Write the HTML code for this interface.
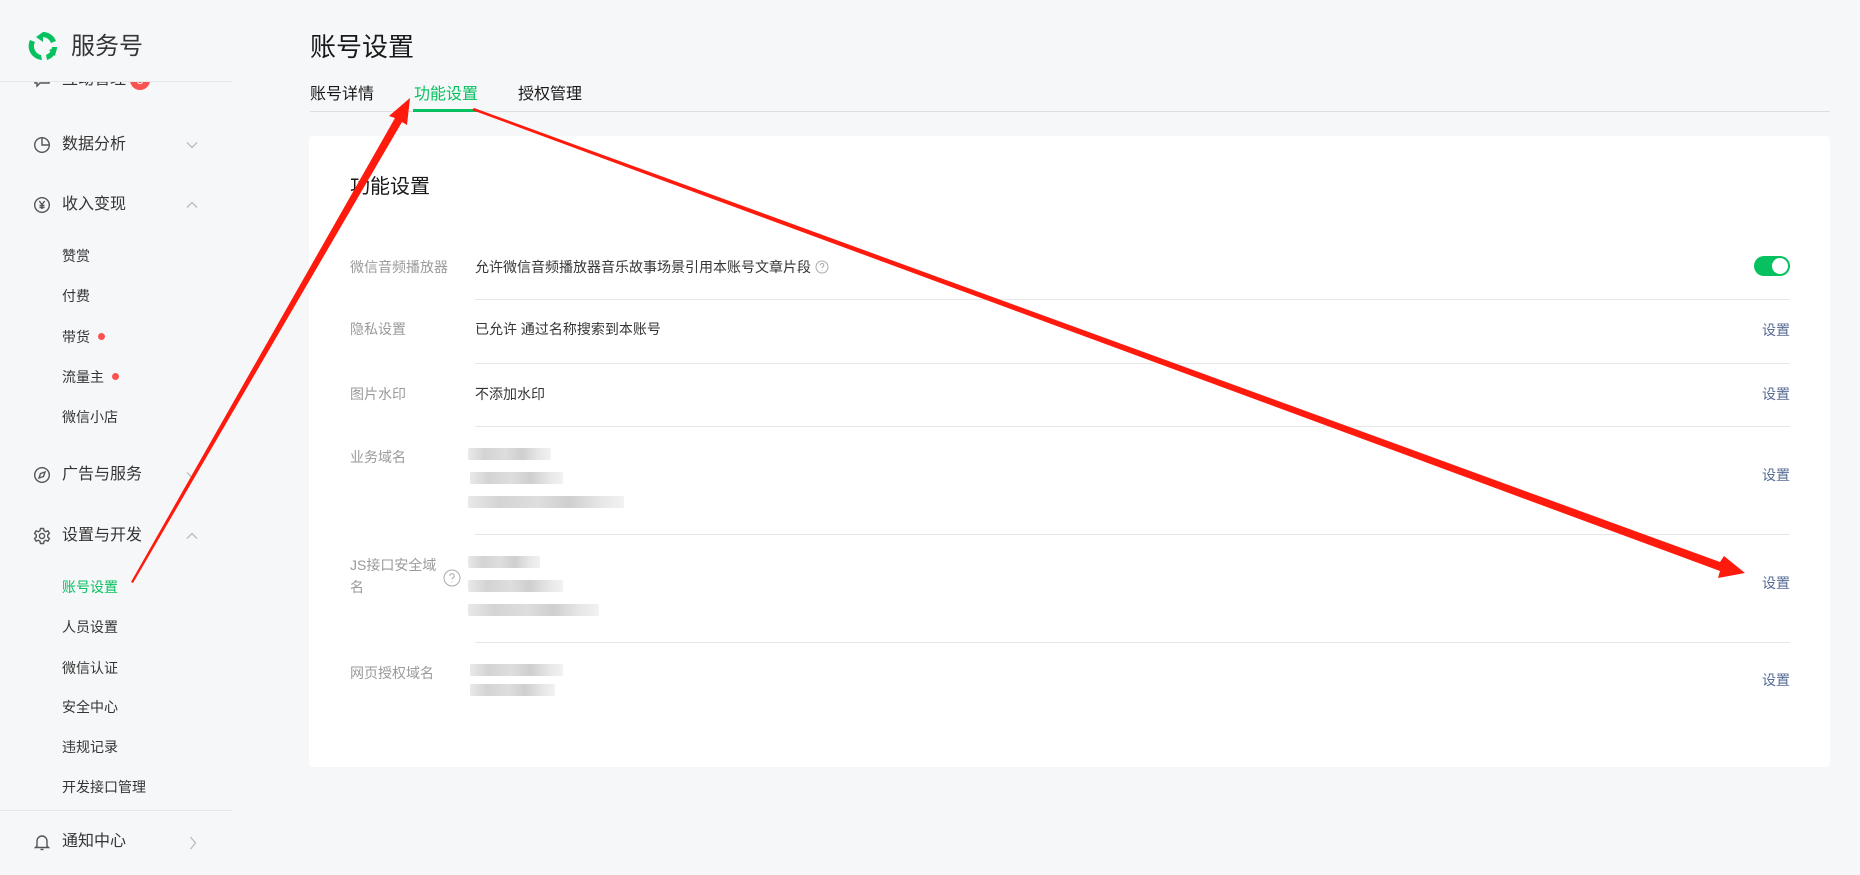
<!DOCTYPE html>
<html><head><meta charset="utf-8"><style>
*{margin:0;padding:0;box-sizing:border-box}
body{width:1860px;height:875px;background:#f6f7f9;position:relative;overflow:hidden;font-family:"Liberation Sans","Noto Sans CJK SC",sans-serif;color:#353535}
.a{position:absolute;white-space:nowrap}
.m{font-size:16px;line-height:20px;left:62px;color:#353535;margin-top:2px}
.s{font-size:14px;line-height:18px;left:62px;color:#353535;margin-top:1px}
.ic{position:absolute;left:33px;width:18px;height:18px;margin-top:2px}
.ch{position:absolute;left:186px;width:12px;height:8px;margin-top:2px}
.lb{font-size:14px;color:#9a9a9a;left:350px;line-height:18px}
.vl{font-size:14px;color:#353535;left:475px;line-height:18px}
.ln{position:absolute;left:475px;width:1315px;height:1px;background:#e7e7e7}
.st{font-size:14px;color:#576b95;right:70px;line-height:18px}
.bl{position:absolute;height:12px;background:linear-gradient(90deg,#e6e6e6,#cfcfcf 20%,#dadada 45%,#c9c9c9 65%,#e4e4e4 85%,#f0f0f0);border-radius:2px;opacity:.9}
</style></head><body>
<div class="a m" style="top:68px">互动管理</div>
<div class="a" style="left:130px;top:70px;width:20px;height:20px;border-radius:10px;background:#fa5151;color:#fff;font-size:12px;text-align:center;line-height:20px">3</div>
<svg class="ic" style="top:68px" viewBox="0 0 18 18" fill="none" stroke="#555" stroke-width="1.4"><path d="M2 3h14v10H7l-3 3v-3H2z"/></svg>

<svg class="ic" style="top:134px" viewBox="0 0 18 18" fill="none" stroke="#555" stroke-width="1.4"><circle cx="9" cy="9" r="7.3"/><path d="M9 1.7V9h7.3"/></svg>
<div class="a m" style="top:133px">数据分析</div>
<svg class="ch" style="top:139px" viewBox="0 0 12 8" fill="none" stroke="#bbb" stroke-width="1.3"><path d="M1 1.5l5 5 5-5"/></svg>

<svg class="ic" style="top:194px" viewBox="0 0 18 18" fill="none" stroke="#555" stroke-width="1.4"><circle cx="9" cy="9" r="7.3"/><path d="M6.3 5l2.7 3.5L11.7 5M9 8.5V13M6.5 9.5h5M6.5 11.5h5"/></svg>
<div class="a m" style="top:193px">收入变现</div>
<svg class="ch" style="top:199px" viewBox="0 0 12 8" fill="none" stroke="#bbb" stroke-width="1.3"><path d="M1 6.5l5-5 5 5"/></svg>

<div class="a s" style="top:246px">赞赏</div>
<div class="a s" style="top:286px">付费</div>
<div class="a s" style="top:327px">带货</div>
<div class="a" style="left:98px;top:333px;width:7px;height:7px;border-radius:4px;background:#fa5151"></div>
<div class="a s" style="top:367px">流量主</div>
<div class="a" style="left:112px;top:373px;width:7px;height:7px;border-radius:4px;background:#fa5151"></div>
<div class="a s" style="top:407px">微信小店</div>

<svg class="ic" style="top:464px" viewBox="0 0 18 18" fill="none" stroke="#555" stroke-width="1.4"><circle cx="9" cy="9" r="7.3"/><path d="M12 6l-4.5 1.5L6 12l4.5-1.5z"/></svg>
<div class="a m" style="top:463px">广告与服务</div>
<svg class="ch" style="top:469px" viewBox="0 0 12 8" fill="none" stroke="#bbb" stroke-width="1.3"><path d="M1 1.5l5 5 5-5"/></svg>

<svg class="ic" style="top:525px" viewBox="0 0 18 18" fill="none" stroke="#555" stroke-width="1.4"><path d="M7.5 1.5h3l.5 2.2 1.8 1 2.1-.8 1.5 2.6-1.7 1.5v2l1.7 1.5-1.5 2.6-2.1-.8-1.8 1-.5 2.2h-3l-.5-2.2-1.8-1-2.1.8-1.5-2.6 1.7-1.5V8L1.6 6.5l1.5-2.6 2.1.8 1.8-1z"/><circle cx="9" cy="9" r="2.6"/></svg>
<div class="a m" style="top:524px">设置与开发</div>
<svg class="ch" style="top:530px" viewBox="0 0 12 8" fill="none" stroke="#bbb" stroke-width="1.3"><path d="M1 6.5l5-5 5 5"/></svg>

<div class="a s" style="top:577px;color:#07c160">账号设置</div>
<div class="a s" style="top:617px">人员设置</div>
<div class="a s" style="top:658px">微信认证</div>
<div class="a s" style="top:697px">安全中心</div>
<div class="a s" style="top:737px">违规记录</div>
<div class="a s" style="top:777px">开发接口管理</div>
<div class="a" style="left:0;top:810px;width:232px;height:1px;background:#e5e6e8"></div>
<svg class="ic" style="top:831px" viewBox="0 0 18 18" fill="none" stroke="#555" stroke-width="1.4"><path d="M4 13V8a5 5 0 0 1 10 0v5l1.5 1.5h-13z"/><path d="M7.5 16.5h3"/></svg>
<div class="a m" style="top:830px">通知中心</div>
<svg class="a" style="left:189px;top:836px;width:8px;height:14px" viewBox="0 0 8 14" fill="none" stroke="#bbb" stroke-width="1.3"><path d="M1.5 1l5 6-5 6"/></svg>

<div class="a" style="left:0;top:0;width:234px;height:81px;background:#f6f7f9"></div>
<div class="a" style="left:0;top:81px;width:232px;height:1px;background:#e5e6e8"></div>
<svg class="a" style="left:27px;top:30px;width:32px;height:32px" viewBox="0 0 32 32"><path d="M16 2a14 14 0 0 1 13 9l-5 2a9 9 0 0 0-8-6V2z" fill="#07c160"/><path d="M30 17a14 14 0 0 1-10 13l-1-5a9 9 0 0 0 6-8z" fill="#07c160"/><path d="M15 30A14 14 0 0 1 3 10l5 2a9 9 0 0 0 6 13z" fill="#07c160"/><path d="M16 2L9 7l7 5z M30 17l-8 3 6 6z" fill="#07c160"/></svg>
<div class="a" style="left:71px;top:33px;font-size:24px;line-height:28px;color:#353535">服务号</div>

<div class="a" style="left:310px;top:32px;font-size:26px;line-height:30px;color:#191919">账号设置</div>
<div class="a" style="left:310px;top:85px;font-size:16px;line-height:20px;color:#191919">账号详情</div>
<div class="a" style="left:414px;top:85px;font-size:16px;line-height:20px;color:#07c160">功能设置</div>
<div class="a" style="left:518px;top:85px;font-size:16px;line-height:20px;color:#191919">授权管理</div>
<div class="a" style="left:310px;top:111px;width:1520px;height:1px;background:#dcdee2"></div>
<div class="a" style="left:413px;top:109px;width:64px;height:3px;background:#07c160"></div>

<div class="a" style="left:309px;top:136px;width:1521px;height:631px;background:#fff;border-radius:4px"></div>
<div class="a" style="left:350px;top:175px;font-size:20px;line-height:24px;color:#191919">功能设置</div>

<div class="a lb" style="top:258px">微信音频播放器</div>
<div class="a vl" style="top:258px">允许微信音频播放器音乐故事场景引用本账号文章片段</div>
<svg class="a" style="left:815px;top:260px;width:14px;height:14px" viewBox="0 0 14 14" fill="none" stroke="#aaa" stroke-width="1"><circle cx="7" cy="7" r="6"/><path d="M5.2 5.3a1.8 1.8 0 1 1 2.5 1.6c-.5.3-.7.6-.7 1.2M7 10v.6"/></svg>
<div class="a" style="left:1754px;top:256px;width:36px;height:20px;border-radius:10px;background:#07c160"></div>
<div class="a" style="left:1772px;top:258px;width:16px;height:16px;border-radius:8px;background:#fff"></div>
<div class="ln" style="top:299px"></div>

<div class="a lb" style="top:320px">隐私设置</div>
<div class="a vl" style="top:320px">已允许 通过名称搜索到本账号</div>
<div class="a st" style="top:321px">设置</div>
<div class="ln" style="top:363px"></div>

<div class="a lb" style="top:385px">图片水印</div>
<div class="a vl" style="top:385px">不添加水印</div>
<div class="a st" style="top:385px">设置</div>
<div class="ln" style="top:426px"></div>

<div class="a lb" style="top:448px">业务域名</div>
<div class="bl" style="left:468px;top:448px;width:83px"></div>
<div class="bl" style="left:470px;top:472px;width:93px"></div>
<div class="bl" style="left:468px;top:496px;width:156px"></div>
<div class="a st" style="top:466px">设置</div>
<div class="ln" style="top:534px"></div>

<div class="a lb" style="top:556px">JS接口安全域</div>
<div class="a lb" style="top:578px">名</div>
<svg class="a" style="left:443px;top:569px;width:18px;height:18px" viewBox="0 0 18 18" fill="none" stroke="#aaa" stroke-width="1"><circle cx="9" cy="9" r="8"/><path d="M6.8 7a2.2 2.2 0 1 1 3 2c-.6.3-.8.7-.8 1.4M9 12.5v.8"/></svg>
<div class="bl" style="left:468px;top:556px;width:72px"></div>
<div class="bl" style="left:468px;top:580px;width:95px"></div>
<div class="bl" style="left:468px;top:604px;width:131px"></div>
<div class="a st" style="top:574px">设置</div>
<div class="ln" style="top:642px"></div>

<div class="a lb" style="top:664px">网页授权域名</div>
<div class="bl" style="left:470px;top:664px;width:93px"></div>
<div class="bl" style="left:470px;top:684px;width:85px"></div>
<div class="a st" style="top:671px">设置</div>

<svg class="a" style="left:0;top:0;width:1860px;height:875px" viewBox="0 0 1860 875">
<polygon points="131,582 133,583 402,122 407,125 410,98 389,116 395,118" fill="#ff1a0e"/>
<polygon points="472,110 474,108 1720,562 1724,556 1745,573 1718,578 1720,571" fill="#ff1a0e"/>
</svg>
</body></html>
